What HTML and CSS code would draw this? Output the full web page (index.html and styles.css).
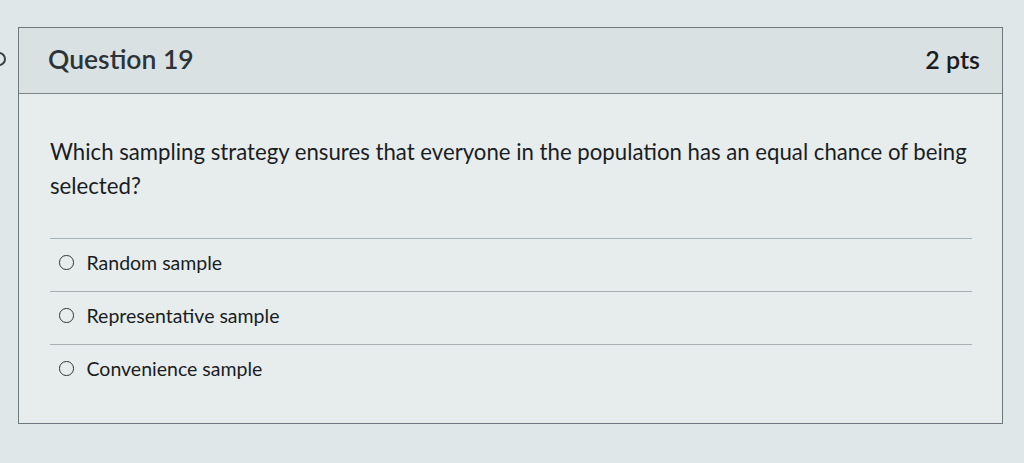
FILE: index.html
```html
<!DOCTYPE html>
<html>
<head>
<meta charset="utf-8">
<link rel="stylesheet" href="styles.css">
</head>
<body>
<div class="page">
  <span class="edge-mark"></span>
  <div class="question">
    <div class="q-header">
      <span class="q-title">Question 19</span>
      <span class="q-pts">2 pts</span>
    </div>
    <div class="q-body">
      <p class="q-text">Which sampling strategy ensures that everyone in the population has an equal chance of being selected?</p>
      <ul class="answers">
        <li class="answer"><span class="radio"></span><span class="label">Random sample</span></li>
        <li class="answer"><span class="radio"></span><span class="label">Representative sample</span></li>
        <li class="answer"><span class="radio"></span><span class="label">Convenience sample</span></li>
      </ul>
    </div>
  </div>
</div>
</body>
</html>
```
FILE: styles.css
```css
html, body {
  margin: 0;
  padding: 0;
  background: #dfe7e8;
  font-family: Lato, "Liberation Sans", sans-serif;
  color: #1a1d1f;
}
.page {
  position: relative;
  width: 1024px;
  height: 463px;
  padding: 27px 0 0 18px;
  box-sizing: border-box;
}
.edge-mark {
  position: absolute;
  left: -8px;
  top: 52px;
  width: 10px;
  height: 10px;
  border: 2px solid #3a3f42;
  border-radius: 50%;
}
.question {
  width: 985px;
  height: 397px;
  box-sizing: border-box;
  border: 1px solid #6e777c;
  background: #e7eded;
}
.q-header {
  height: 66px;
  box-sizing: border-box;
  background: #dae1e3;
  border-bottom: 1px solid #7c858a;
  display: flex;
  justify-content: space-between;
  align-items: center;
  padding: 0 22px 4px 29px;
}
.q-title {
  font-size: 26.5px;
  font-weight: 600;
  color: #2c3438;
}
.q-pts {
  font-size: 25px;
  font-weight: 600;
  color: #1a1d1f;
}
.q-body {
  padding: 41px 30px 0 31px;
}
.q-text {
  margin: 0 -24px 0 0;
  font-size: 22.2px;
  line-height: 34px;
  color: #1a1d1f;
}
.answers {
  list-style: none;
  margin: 35px 0 0 0;
  padding: 0;
}
.answer {
  display: flex;
  align-items: center;
  height: 53px;
  box-sizing: border-box;
  border-top: 1px solid #a7b0b3;
  padding: 0 0 5px 9px;
}
.radio {
  width: 12.5px;
  height: 12.5px;
  border: 1.8px solid #2f3437;
  border-radius: 50%;
  margin-right: 13px;
  flex: none;
}
.label {
  font-size: 19.5px;
  color: #1a1d1f;
}
```
